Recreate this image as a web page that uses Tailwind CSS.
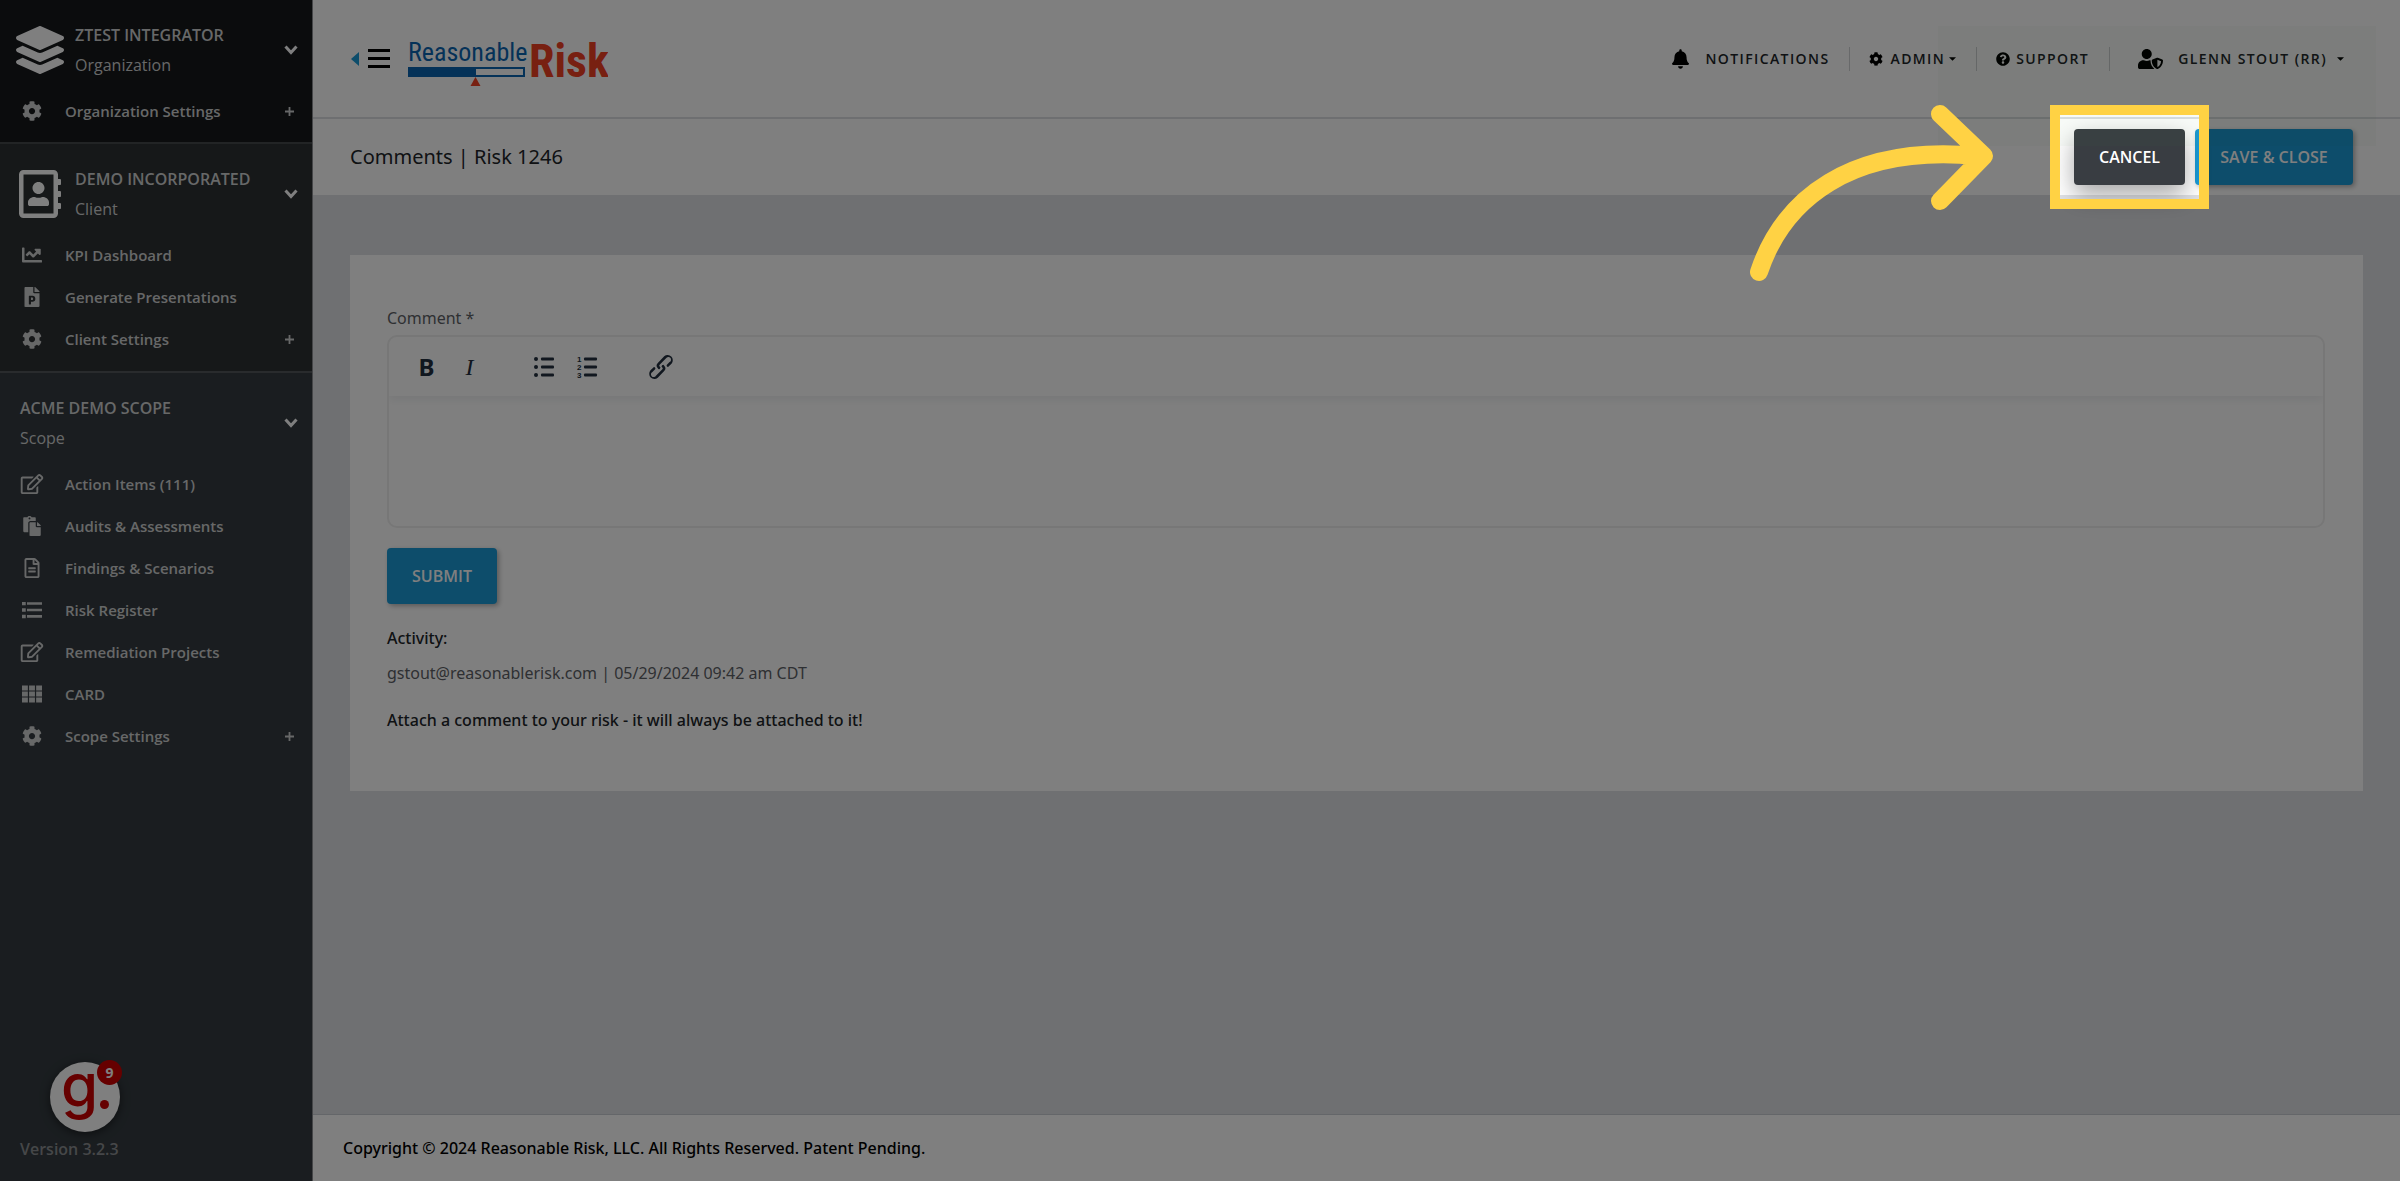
<!DOCTYPE html>
<html lang="en">
<head>
  <meta charset="UTF-8">
  <meta name="viewport" content="width=device-width, initial-scale=1.0">
  <title>Comments | Risk 1246</title>
  <script src="https://cdn.jsdelivr.net/npm/@tailwindcss/browser@4"></script>
</head>
<body class="relative min-h-screen flex bg-[#dfe1e5] font-['Open_Sans',sans-serif] text-base text-[#212529] overflow-x-hidden">
  <!-- Icon sprite -->
  <svg class="hidden" aria-hidden="true">
    <symbol id="cog" viewBox="0 0 512 512"><path d="M487.4 315.7l-42.6-24.6c4.3-23.2 4.3-47 0-70.2l42.6-24.6c4.9-2.8 7.1-8.6 5.5-14-11.1-35.6-30-67.8-54.7-94.6-3.8-4.1-10-5.1-14.8-2.3L380.8 110c-17.9-15.4-38.5-27.3-60.8-35.1V25.8c0-5.6-3.9-10.5-9.4-11.7-36.7-8.2-74.3-7.8-109.2 0-5.5 1.2-9.4 6.1-9.4 11.7V75c-22.2 7.9-42.8 19.8-60.8 35.1L88.7 85.5c-4.9-2.8-11-1.9-14.8 2.3-24.7 26.7-43.6 58.9-54.7 94.6-1.7 5.4.6 11.2 5.5 14L67.3 221c-4.3 23.2-4.3 47 0 70.2l-42.6 24.6c-4.9 2.8-7.1 8.6-5.5 14 11.1 35.6 30 67.8 54.7 94.6 3.8 4.1 10 5.1 14.8 2.3l42.6-24.6c17.9 15.4 38.5 27.3 60.8 35.1v49.2c0 5.6 3.9 10.5 9.4 11.7 36.7 8.2 74.3 7.8 109.2 0 5.5-1.2 9.4-6.1 9.4-11.7v-49.2c22.2-7.9 42.8-19.8 60.8-35.1l42.6 24.6c4.9 2.8 11 1.9 14.8-2.3 24.7-26.7 43.6-58.9 54.7-94.6 1.5-5.5-.7-11.3-5.6-14.1zM256 336c-44.1 0-80-35.9-80-80s35.9-80 80-80 80 35.9 80 80-35.9 80-80 80z"/></symbol>
    <symbol id="layers" viewBox="0 0 512 512"><path d="M12.41 148.02l232.94 105.67c6.8 3.09 14.49 3.09 21.29 0l232.94-105.67c16.55-7.51 16.55-32.52 0-40.03L266.65 2.31a25.607 25.607 0 0 0-21.29 0L12.41 107.98c-16.55 7.51-16.55 32.53 0 40.04zm487.18 88.28l-58.09-26.33-161.64 73.27c-7.56 3.43-15.59 5.17-23.86 5.17s-16.29-1.74-23.86-5.17L70.51 209.97l-58.1 26.33c-16.55 7.5-16.55 32.5 0 40l232.94 105.59c6.8 3.08 14.49 3.08 21.29 0L499.59 276.3c16.55-7.5 16.55-32.5 0-40zm0 127.8l-57.87-26.23-161.86 73.37c-7.56 3.43-15.59 5.17-23.86 5.17s-16.29-1.74-23.86-5.17L70.29 337.87 12.41 364.1c-16.55 7.5-16.55 32.5 0 40l232.94 105.59c6.8 3.08 14.49 3.08 21.29 0L499.59 404.1c16.55-7.5 16.55-32.5 0-40z"/></symbol>
    <symbol id="address-book" viewBox="0 0 448 512"><path d="M436 160c6.6 0 12-5.4 12-12v-40c0-6.6-5.4-12-12-12h-20V48c0-26.5-21.5-48-48-48H48C21.5 0 0 21.5 0 48v416c0 26.5 21.5 48 48 48h320c26.5 0 48-21.5 48-48v-48h20c6.6 0 12-5.4 12-12v-40c0-6.6-5.4-12-12-12h-20v-64h20c6.6 0 12-5.4 12-12v-40c0-6.6-5.4-12-12-12h-20v-64h20zm-68 304H48V48h320v416zM208 256c35.3 0 64-28.7 64-64s-28.7-64-64-64-64 28.7-64 64 28.7 64 64 64zm-89.6 128h179.2c12.4 0 22.4-8.6 22.4-19.2v-19.2c0-31.8-30.1-57.6-67.2-57.6-10.8 0-18.7 8-44.8 8-26.9 0-33.4-8-44.8-8-37.1 0-67.2 25.8-67.2 57.6v19.2c0 10.6 10 19.2 22.4 19.2z"/></symbol>
    <symbol id="chart-line" viewBox="0 0 512 512"><path d="M496 384H64V80c0-8.84-7.16-16-16-16H16C7.16 64 0 71.16 0 80v336c0 17.67 14.33 32 32 32h464c8.84 0 16-7.16 16-16v-32c0-8.84-7.16-16-16-16zM464 96H345.94c-21.38 0-32.09 25.85-16.97 40.97l32.4 32.4L288 242.75l-73.37-73.37c-12.5-12.5-32.76-12.5-45.25 0l-68.69 68.69c-6.25 6.25-6.25 16.38 0 22.63l22.62 22.62c6.25 6.25 16.38 6.25 22.63 0L192 237.25l73.37 73.37c12.5 12.5 32.76 12.5 45.25 0l96-96 32.4 32.4c15.12 15.12 40.97 4.41 40.97-16.97V112c.01-8.84-7.15-16-15.99-16z"/></symbol>
    <symbol id="powerpoint" viewBox="0 0 384 512"><path d="M193.7 271.2c8.8 0 15.5 2.7 20.3 8.1 9.6 10.9 9.8 32.7-.2 44.1-4.9 5.6-11.9 8.5-21.1 8.5h-26.9v-60.7h27.9zM377 105L279 7c-4.5-4.5-10.6-7-17-7h-6v128h128v-6.1c0-6.3-2.5-12.4-7-16.9zm-153 31V0H24C10.7 0 0 10.7 0 24v464c0 13.3 10.7 24 24 24h336c13.3 0 24-10.7 24-24V160H248c-13.2 0-24-10.8-24-24zm53 165.2c0 90.3-88.8 77.6-111.1 77.6V436c0 6.6-5.4 12-12 12h-30.8c-6.6 0-12-5.4-12-12V236.2c0-6.6 5.4-12 12-12h81c44.5 0 72.9 32.8 72.9 77z"/></symbol>
    <symbol id="edit" viewBox="0 0 576 512"><path d="M402.3 344.9l32-32c5-5 13.7-1.5 13.7 5.7V464c0 26.5-21.5 48-48 48H48c-26.5 0-48-21.5-48-48V112c0-26.5 21.5-48 48-48h273.5c7.1 0 10.7 8.6 5.7 13.7l-32 32c-1.5 1.5-3.5 2.3-5.7 2.3H48v352h352V350.5c0-2.1.8-4.1 2.3-5.6zm156.6-201.8L296.3 405.7l-90.4 10c-26.2 2.9-48.5-19.2-45.6-45.6l10-90.4L432.9 17.1c22.9-22.9 59.9-22.9 82.7 0l43.2 43.2c22.9 22.9 22.9 60 .1 82.8zM460.1 174L402 115.9 216.2 301.8l-7.3 65.3 65.3-7.3L460.1 174zm64.8-79.7l-43.2-43.2c-4.1-4.1-10.8-4.1-14.8 0L436 82l58.1 58.1 30.9-30.9c4-4.2 4-10.8-.1-14.9z"/></symbol>
    <symbol id="paste" viewBox="0 0 448 512"><path d="M128 184c0-30.879 25.122-56 56-56h136V56c0-13.255-10.745-24-24-24h-80.61C204.306 12.89 183.637 0 160 0s-44.306 12.89-55.39 32H24C10.745 32 0 42.745 0 56v336c0 13.255 10.745 24 24 24h104V184zm32-144c13.255 0 24 10.745 24 24s-10.745 24-24 24-24-10.745-24-24 10.745-24 24-24zm184 248h104v200c0 13.255-10.745 24-24 24H184c-13.255 0-24-10.745-24-24V184c0-13.255 10.745-24 24-24h136v104c0 13.2 10.8 24 24 24zm104-38.059V256h-96v-96h6.059a24 24 0 0 1 16.97 7.029l65.941 65.941a24.002 24.002 0 0 1 7.03 16.971z"/></symbol>
    <symbol id="file" viewBox="0 0 384 512"><path d="M288 248v28c0 6.6-5.4 12-12 12H108c-6.6 0-12-5.4-12-12v-28c0-6.6 5.4-12 12-12h168c6.6 0 12 5.4 12 12zm-12 72H108c-6.6 0-12 5.4-12 12v28c0 6.6 5.4 12 12 12h168c6.6 0 12-5.4 12-12v-28c0-6.6-5.4-12-12-12zm108-188.1V464c0 26.5-21.5 48-48 48H48c-26.5 0-48-21.5-48-48V48C0 21.5 21.5 0 48 0h204.1C264.8 0 277 5.1 286 14.1L369.9 98c9 8.9 14.1 21.2 14.1 33.9zm-128-80V128h76.1L256 51.9zM336 464V176H232c-13.3 0-24-10.7-24-24V48H48v416h288z"/></symbol>
    <symbol id="list" viewBox="0 0 512 512"><path d="M0 48h96v88H0zM128 56h384v68H128zM0 212h96v88H0zM128 222h384v68H128zM0 376h96v88H0zM128 386h384v68H128z"/></symbol>
    <symbol id="grid" viewBox="0 0 512 512"><path d="M0 40h150v126H0zM181 40h150v126H181zM362 40h150v126H362zM0 193h150v126H0zM181 193h150v126H181zM362 193h150v126H362zM0 346h150v126H0zM181 346h150v126H181zM362 346h150v126H362z"/></symbol>
    <symbol id="bell" viewBox="0 0 448 512"><path d="M224 512c35.32 0 63.97-28.65 63.97-64H160.03c0 35.35 28.65 64 63.97 64zm215.39-149.71c-19.32-20.76-55.47-51.99-55.47-154.29 0-77.7-54.48-139.9-127.94-155.16V32c0-17.67-14.32-32-31.98-32s-31.98 14.33-31.98 32v20.84C118.56 68.1 64.08 130.3 64.08 208c0 102.3-36.15 133.53-55.47 154.29-6 6.45-8.66 14.16-8.61 21.71.11 16.4 12.98 32 32.1 32h383.8c19.12 0 32-15.6 32.1-32 .05-7.55-2.61-15.27-8.61-21.71z"/></symbol>
    <symbol id="question" viewBox="0 0 512 512"><path d="M504 256c0 136.997-111.043 248-248 248S8 392.997 8 256C8 119.083 119.043 8 256 8s248 111.083 248 248zM262.655 90c-54.497 0-89.255 22.957-116.549 63.758-3.536 5.286-2.353 12.415 2.715 16.258l34.699 26.31c5.205 3.947 12.621 3.008 16.665-2.122 17.864-22.658 30.113-35.797 57.303-35.797 20.429 0 45.698 13.148 45.698 32.958 0 14.976-12.363 22.667-32.534 33.976C247.128 238.528 216 254.941 216 296v4c0 6.627 5.373 12 12 12h56c6.627 0 12-5.373 12-12v-1.333c0-28.462 83.186-29.647 83.186-106.667 0-58.002-60.165-102-116.531-102zM256 338c-25.365 0-46 20.635-46 46 0 25.364 20.635 46 46 46s46-20.636 46-46c0-25.365-20.635-46-46-46z"/></symbol>
    <symbol id="user-shield" viewBox="0 0 640 512"><path d="M622.3 271.1l-115.2-45c-4.1-1.6-12.6-3.7-22.2 0l-115.2 45c-10.7 4.2-17.7 14-17.7 24.9 0 111.6 68.7 188.8 132.9 213.9 9.6 3.7 18 1.6 22.2 0C558.4 489.9 640 420.5 640 296c0-10.9-7-20.7-17.7-24.9zM496 462.4V273.3l95.5 37.3c-5.6 87.1-60.9 135.4-95.5 151.8zM224 256c70.7 0 128-57.3 128-128S294.7 0 224 0 96 57.3 96 128s57.3 128 128 128zm96 40c0-2.5.8-4.8 1.1-7.2-2.5-.1-4.9-.8-7.5-.8h-16.7c-22.2 10.2-46.9 16-72.9 16s-50.6-5.8-72.9-16h-16.7C60.2 288 0 348.2 0 422.4V464c0 26.5 21.5 48 48 48h352c6.8 0 13.3-1.5 19.2-4-54-42.9-99.2-116.7-99.2-212z"/></symbol>
    <symbol id="chevron" viewBox="0 0 14 10"><path d="M1.5 1.5L7 7.5l5.500-6" fill="none" stroke="currentColor" stroke-width="3"/></symbol>
    <symbol id="plus" viewBox="0 0 10 10"><path d="M4 0h2v4h4v2H6v4H4V6H0V4h4z"/></symbol>
    <symbol id="caret" viewBox="0 0 8 4"><path d="M0 0h8L4 4z"/></symbol>
  </svg>

  <!-- Sidebar -->
  <aside class="w-[313px] shrink-0 flex flex-col bg-[#343b40] border-r border-[#8a8d90] font-semibold text-[#cfd0d1]">
    <section class="bg-[#16191b] border-b-2 border-[#45484b] pt-5 pb-[10px]">
      <button class="w-full flex items-center text-left pl-4 pr-[14px] mb-[10px]">
        <svg class="w-12 h-12 mr-[11px] fill-white"><use href="#layers"/></svg>
        <span class="flex-1 leading-[30px]">
          <span class="block">ZTEST INTEGRATOR</span>
          <span class="block font-normal">Organization</span>
        </span>
        <svg class="w-[14px] h-[10px] text-white"><use href="#chevron"/></svg>
      </button>
      <nav>
        <a href="#" class="h-[42px] flex items-center pl-5 pr-[18px] text-[15px]">
          <svg class="w-6 h-5 mr-[21px] fill-current"><use href="#cog"/></svg>
          <span class="flex-1">Organization Settings</span>
          <svg class="size-[9px] fill-current"><use href="#plus"/></svg>
        </a>
      </nav>
    </section>

    <section class="bg-[#2d3033] border-b-2 border-[#52565a] pt-5 pb-[11px]">
      <button class="w-full flex items-center text-left pl-[19px] pr-[14px] mb-[10px]">
        <svg class="w-[42px] h-12 mr-[14px] fill-white"><use href="#address-book"/></svg>
        <span class="flex-1 leading-[30px]">
          <span class="block">DEMO INCORPORATED</span>
          <span class="block font-normal">Client</span>
        </span>
        <svg class="w-[14px] h-[10px] text-white"><use href="#chevron"/></svg>
      </button>
      <nav>
        <a href="#" class="h-[42px] flex items-center pl-5 pr-[18px] text-[15px]">
          <svg class="w-6 h-5 mr-[21px] fill-current"><use href="#chart-line"/></svg>
          <span class="flex-1">KPI Dashboard</span>
        </a>
        <a href="#" class="h-[42px] flex items-center pl-5 pr-[18px] text-[15px]">
          <svg class="w-6 h-5 mr-[21px] fill-current"><use href="#powerpoint"/></svg>
          <span class="flex-1">Generate Presentations</span>
        </a>
        <a href="#" class="h-[42px] flex items-center pl-5 pr-[18px] text-[15px]">
          <svg class="w-6 h-5 mr-[21px] fill-current"><use href="#cog"/></svg>
          <span class="flex-1">Client Settings</span>
          <svg class="size-[9px] fill-current"><use href="#plus"/></svg>
        </a>
      </nav>
    </section>

    <section class="pt-5">
      <button class="w-full flex items-center text-left pl-5 pr-[14px] mb-[10px]">
        <span class="flex-1 leading-[30px]">
          <span class="block">ACME DEMO SCOPE</span>
          <span class="block font-normal">Scope</span>
        </span>
        <svg class="w-[14px] h-[10px] text-white"><use href="#chevron"/></svg>
      </button>
      <nav>
        <a href="#" class="h-[42px] flex items-center pl-5 pr-[18px] text-[15px]">
          <svg class="w-6 h-5 mr-[21px] fill-current"><use href="#edit"/></svg>
          <span class="flex-1">Action Items (111)</span>
        </a>
        <a href="#" class="h-[42px] flex items-center pl-5 pr-[18px] text-[15px]">
          <svg class="w-6 h-5 mr-[21px] fill-current"><use href="#paste"/></svg>
          <span class="flex-1">Audits &amp; Assessments</span>
        </a>
        <a href="#" class="h-[42px] flex items-center pl-5 pr-[18px] text-[15px]">
          <svg class="w-6 h-5 mr-[21px] fill-current"><use href="#file"/></svg>
          <span class="flex-1">Findings &amp; Scenarios</span>
        </a>
        <a href="#" class="h-[42px] flex items-center pl-5 pr-[18px] text-[15px]">
          <svg class="w-6 h-5 mr-[21px] fill-current"><use href="#list"/></svg>
          <span class="flex-1">Risk Register</span>
        </a>
        <a href="#" class="h-[42px] flex items-center pl-5 pr-[18px] text-[15px]">
          <svg class="w-6 h-5 mr-[21px] fill-current"><use href="#edit"/></svg>
          <span class="flex-1">Remediation Projects</span>
        </a>
        <a href="#" class="h-[42px] flex items-center pl-5 pr-[18px] text-[15px]">
          <svg class="w-6 h-5 mr-[21px] fill-current"><use href="#grid"/></svg>
          <span class="flex-1">CARD</span>
        </a>
        <a href="#" class="h-[42px] flex items-center pl-5 pr-[18px] text-[15px]">
          <svg class="w-6 h-5 mr-[21px] fill-current"><use href="#cog"/></svg>
          <span class="flex-1">Scope Settings</span>
          <svg class="size-[9px] fill-current"><use href="#plus"/></svg>
        </a>
      </nav>
    </section>

    <div class="mt-auto px-5 pb-5">
      <button class="relative block ml-[30px] mb-[5px] size-[70px] rounded-full bg-white shadow-[0_2px_10px_#0008]" aria-label="Help, 9 new">
        <svg class="size-[70px] overflow-visible" viewBox="0 0 70 70" fill="#cc0000"><text x="11" y="45" font-family="Inter" font-weight="500" font-size="60">g</text><circle cx="54.500" cy="42.500" r="4.500"/></svg>
        <span class="absolute -top-[2px] -right-[2px] size-[25px] rounded-full bg-[#cc0000] text-white text-sm leading-[25px] text-center font-bold">9</span>
      </button>
      <p class="text-[#8c8f92]">Version 3.2.3</p>
    </div>
  </aside>

  <!-- Main column -->
  <div class="flex-1 min-w-0 flex flex-col">
    <header class="h-[119px] shrink-0 bg-white border-b-2 border-[#dcdfe3] pl-[38px] pr-14 flex items-center">
      <button class="flex items-center gap-[9px]" aria-label="Toggle menu">
        <svg class="w-2 h-[14px] fill-[#1a9ad6]" viewBox="0 0 8 14"><path d="M8 0v14L0 7z"/></svg>
        <svg class="w-[22px] h-5" viewBox="0 0 22 20"><path d="M0 0h22v3H0zM0 8h22v3H0zM0 16h22v3H0z"/></svg>
      </button>
      <a href="#" class="ml-[18px]" aria-label="Reasonable Risk">
        <svg class="w-[200px] h-[60px]" viewBox="0 0 200 60" font-family="'Liberation Sans Narrow','Roboto Condensed','Liberation Sans'">
          <text x="0" y="32" font-size="26" fill="#0b65b0">Reasonable</text>
          <rect x="1" y="39" width="115" height="8" fill="none" stroke="#0b65b0" stroke-width="2"/>
          <rect x="0" y="38" width="68" height="10" fill="#0b65b0"/>
          <path d="M67.500 48l5 9h-10z" fill="#f04023"/>
          <text x="121" y="48" font-size="46" font-weight="700" fill="#f04023">Risk</text>
        </svg>
      </a>
      <nav class="ml-auto flex items-center text-sm font-semibold tracking-widest text-[#212529]">
        <a href="#" class="flex items-center pr-5"><svg class="w-[17px] h-5 mr-[16px]"><use href="#bell"/></svg>NOTIFICATIONS</a>
        <a href="#" class="flex items-center border-l border-[#d0d2d4] pl-[19px] pr-5 h-6"><svg class="size-[14px] mr-[7px]"><use href="#cog"/></svg>ADMIN<svg class="ml-1 w-[7px] h-1"><use href="#caret"/></svg></a>
        <a href="#" class="flex items-center border-l border-[#d0d2d4] pl-[19px] pr-5 h-6"><svg class="size-[14px] mr-[6px]"><use href="#question"/></svg>SUPPORT</a>
        <a href="#" class="flex items-center border-l border-[#d0d2d4] pl-7 h-6"><svg class="w-[25px] h-5 mr-[15px]"><use href="#user-shield"/></svg>GLENN STOUT (RR)<svg class="ml-[10px] w-[7px] h-1"><use href="#caret"/></svg></a>
      </nav>
    </header>

    <div class="h-[76px] shrink-0 bg-white pl-[37px] pr-[47px] flex items-center">
      <h1 class="text-xl font-['Noto_Sans',sans-serif]">Comments | Risk 1246</h1>
      <div class="ml-auto flex gap-[10px] font-semibold text-base text-white">
        <div class="relative">
          <button class="h-14 w-[111px] rounded bg-[#393d42] shadow-[0_10px_24px_rgba(0,0,0,0.35)]">CANCEL</button>
          <!-- Tour spotlight: the spread shadow dims the rest of the page -->
          <div class="absolute z-40 -inset-6 border-[10px] border-[#ffd244] shadow-[0_0_0_4000px_rgba(0,0,0,0.5)] pointer-events-none"></div>
          <svg class="absolute z-50 -top-[29px] right-[187px] w-[253px] h-[190px] pointer-events-none" viewBox="0 0 253 190" fill="none" stroke="#ffd244" stroke-width="18" stroke-linecap="round" stroke-linejoin="round">
            <path d="M14 172C38 100 105 44 232 56M195 14l44 42-44 45"/>
          </svg>
        </div>
        <button class="h-14 w-[158px] rounded bg-[#1a9ad6] shadow-[2px_2px_5px_rgba(0,0,0,0.3)]">SAVE &amp; CLOSE</button>
      </div>
    </div>

    <main class="px-[37px] py-[60px]">
      <div class="bg-white pl-[37px] pr-[38px] pt-[51px] pb-[59px] font-['Noto_Sans',sans-serif]">
        <label for="comment" class="block text-[#5d6166]">Comment *</label>
        <div class="mt-[5px] h-[193px] border-2 border-[#eeeeee] rounded-[10px] overflow-hidden flex flex-col">
          <div class="h-[59px] shrink-0 pl-4 flex items-center gap-[31px] text-[#222f3e] shadow-[0_4px_8px_rgba(34,47,62,0.07)]">
            <div class="flex">
              <button class="w-[43px] h-10 text-2xl leading-none font-bold" aria-label="Bold">B</button>
              <button class="w-[43px] h-10 text-2xl leading-none italic font-['Liberation_Serif',serif]" aria-label="Italic">I</button>
            </div>
            <div class="flex">
              <button class="w-[43px] h-10 flex items-center justify-center" aria-label="Bullet list">
                <svg class="w-5 h-[22px]" viewBox="0 0 20 22" fill="currentColor"><circle cx="2" cy="3" r="2"/><circle cx="2" cy="11" r="2"/><circle cx="2" cy="19" r="2"/><rect x="7" y="1.500" width="13" height="3" rx="1"/><rect x="7" y="9.500" width="13" height="3" rx="1"/><rect x="7" y="17.500" width="13" height="3" rx="1"/></svg>
              </button>
              <button class="w-[43px] h-10 flex items-center justify-center" aria-label="Numbered list">
                <svg class="w-5 h-[22px] overflow-visible" viewBox="0 0 20 22" fill="currentColor"><g font-family="Liberation Sans" font-size="8" font-weight="700"><text x="0" y="6">1</text><text x="0" y="14">2</text><text x="0" y="22">3</text></g><rect x="7" y="1.500" width="13" height="3" rx="1"/><rect x="7" y="9.500" width="13" height="3" rx="1"/><rect x="7" y="17.500" width="13" height="3" rx="1"/></svg>
              </button>
            </div>
            <button class="w-[43px] h-10 flex items-center justify-center" aria-label="Link">
              <svg class="size-8" viewBox="0 0 24 24" fill="currentColor"><path d="M6.200 12.300a1 1 0 0 1 1.400 1.400l-2 2a2 2 0 1 0 2.600 2.800l4.800-4.800a1 1 0 0 0 0-1.400 1 1 0 1 1 1.400-1.300 2.900 2.900 0 0 1 0 4L9.600 20a3.900 3.900 0 0 1-5.500-5.500l2-2Zm11.600-.6a1 1 0 0 1-1.400-1.400l2-2a2 2 0 1 0-2.600-2.800L11 10.300a1 1 0 0 0 0 1.400A1 1 0 1 1 9.600 13a2.900 2.900 0 0 1 0-4L14.400 4a3.900 3.900 0 0 1 5.500 5.500l-2 2Z"/></svg>
            </button>
          </div>
          <textarea id="comment" class="flex-1 resize-none px-5 py-4 focus:outline-none"></textarea>
        </div>
        <button class="mt-5 h-14 w-[110px] rounded bg-[#1a9ad6] text-white font-semibold font-['Open_Sans',sans-serif] shadow-[2px_2px_5px_rgba(0,0,0,0.3)]">SUBMIT</button>
        <p class="mt-[22px] font-medium">Activity:</p>
        <p class="mt-[11px] text-[#5d6166]">gstout@reasonablerisk.com | 05/29/2024 09:42 am CDT</p>
        <p class="mt-[23px] font-medium">Attach a comment to your risk - it will always be attached to it!</p>
      </div>
    </main>

    <footer class="mt-auto h-[67px] bg-white border-t border-[#c9ccd3] pl-[30px] flex items-center text-black font-medium font-['Noto_Sans',sans-serif]">Copyright © 2024 Reasonable Risk, LLC. All Rights Reserved. Patent Pending.</footer>
  </div>

  <!-- Toast, almost faded out -->
  <div class="absolute top-[26px] right-6 w-[438px] h-[120px] bg-[#51a351]/4 pointer-events-none"></div>
</body>
</html>
